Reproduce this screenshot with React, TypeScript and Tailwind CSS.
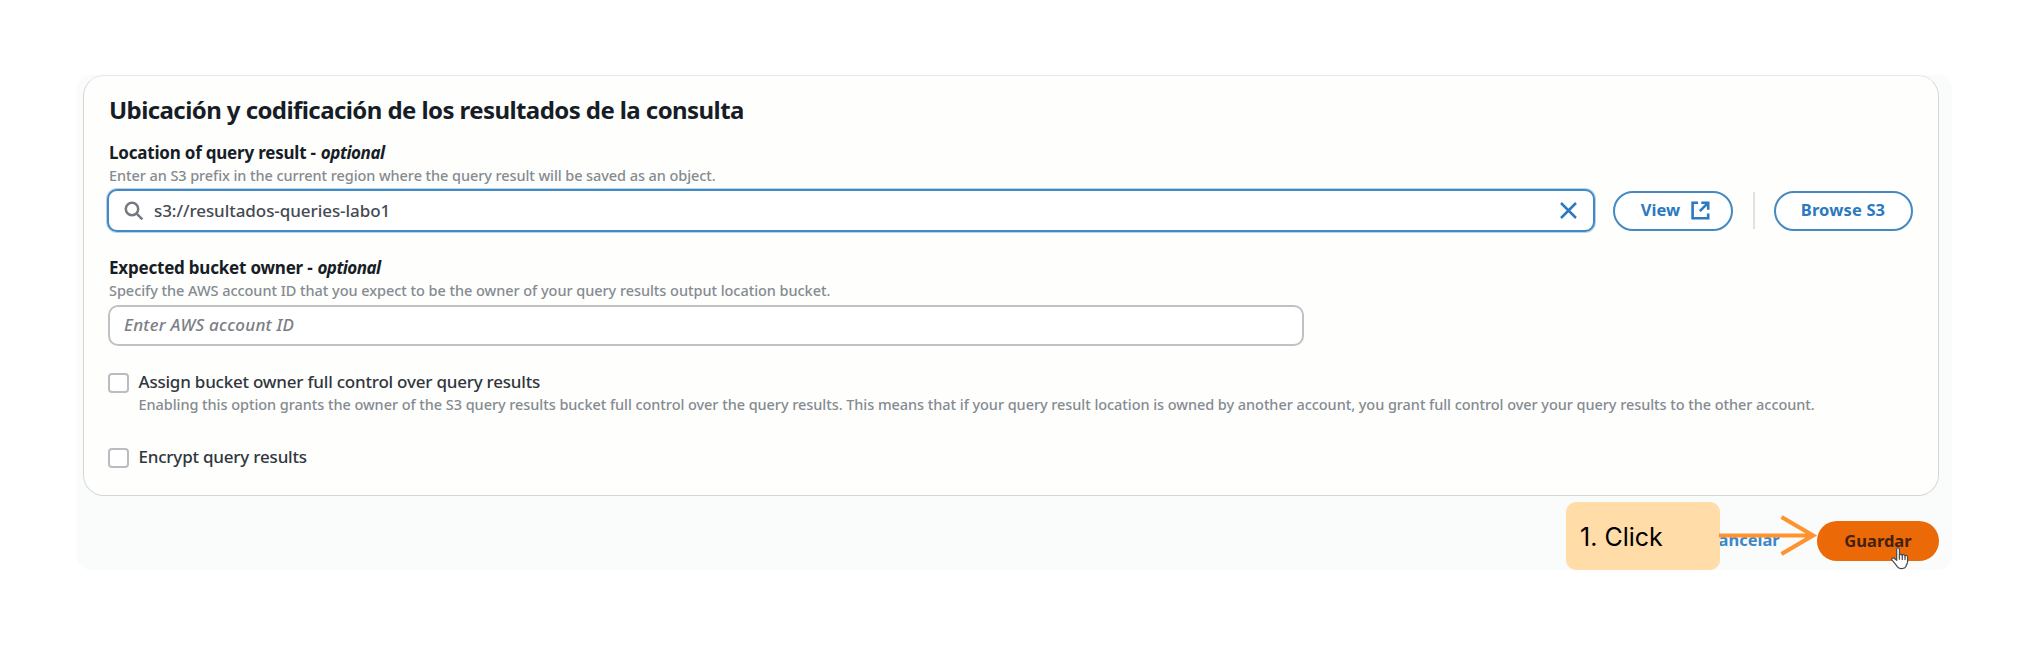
import type { ReactNode } from "react";

function Label({ children, optionalClass }: { children: ReactNode; optionalClass: string }) {
  return (
    <div className="flex h-[22px] items-center gap-[5px] whitespace-nowrap text-[17px] leading-[22px] font-bold text-[#171d26]">
      <span className="tracking-[-0.21px]">{children}</span>
      <em className={optionalClass}>optional</em>
    </div>
  );
}

function Hint({ children, className }: { children: ReactNode; className: string }) {
  return <p className={`h-5 whitespace-nowrap text-[14.5px] leading-5 font-medium text-[#858b91] ${className}`}>{children}</p>;
}

function Checkbox() {
  return <span className="mt-[2px] h-[20.5px] w-[20.5px] shrink-0 rounded-[4px] border-2 border-[#b9bdc1] bg-white" />;
}

function SearchIcon() {
  return (
    <svg className="h-5 w-5 shrink-0" viewBox="0 0 20 20" fill="none" stroke="#737980" strokeWidth="2.5">
      <circle cx="8" cy="8" r="6.2" />
      <path d="M12.4 12.4 18.4 18.4" />
    </svg>
  );
}

function ExternalIcon() {
  return (
    <svg className="h-[19px] w-[19px] shrink-0" viewBox="0 0 19 19" fill="none" stroke="#2b79c0" strokeWidth="2.6">
      <path d="M7 1.8H1.6v15.4h15.6V12.5" />
      <path d="M10.3 1.8h6.900v7M16.8 2.2 8.800 10.2" />
    </svg>
  );
}

function HandCursor() {
  return (
    <svg className="absolute top-[26px] left-[74px] h-[23px] w-[18px]" viewBox="0 0 19 24" fill="#fff" stroke="#4a4a4a" strokeWidth="1.3" strokeLinejoin="round" strokeLinecap="round">
      <path d="M6 2.2c0-2 2.900-2 2.900 0v6.300c.3-1.300 2.700-1.300 3 .3.4-1.200 2.600-1 2.900.5.7-1 2.700-.7 2.700 1.200v5.300c0 1.800-1.700 3-1.700 4.700-1.500 3-7 3-9 .3C5.500 18.700 3.500 16.500 1.100 13.700c-1.200-1.600.9-3.100 2.300-1.900L6 14z" />
      <path d="M8.900 8.500v4.300M11.900 9v4M14.800 9.700v3.400" fill="none" />
    </svg>
  );
}

export default function App() {
  return (
    <main className="h-[645px] w-[2025px] overflow-hidden bg-white pt-[75px] pl-[77px] font-['Noto_Sans',sans-serif]">
      <div className="h-[495px] w-[1875px] rounded-[14px] bg-[#fafbfb] pl-[6px]">
        <section className="h-[421px] w-[1856px] rounded-[21px] border border-[#d3d6d9] border-t-[#e6e8e8] bg-[#fefefd] pt-[19px] pr-[24px] pl-[25px]">
          <h1 className="h-[30px] text-[24px] leading-[30px] font-bold tracking-[-0.58px] whitespace-nowrap text-[#171d26]">
            Ubicación y codificación de los resultados de la consulta
          </h1>

          <div className="mt-[17px]">
            <Label optionalClass="tracking-[-0.45px]">Location of query result -</Label>
            <Hint className="mt-[1px] tracking-[-0.08px]">
              Enter an S3 prefix in the current region where the query result will be saved as an object.
            </Hint>
            <div className="-ml-[2px] mt-[4px] flex items-center">
              <div className="flex h-[43px] w-[1488px] items-center rounded-[10px] border-2 border-[#4489c2] bg-white pr-[16px] pl-[15px] ring-1 ring-[#b5d5ec]">
                <SearchIcon />
                <span className="ml-[10px] flex-1 text-[17px] leading-[22px] font-medium tracking-[-0.06px] text-[#444a51]">
                  s3://resultados-queries-labo1
                </span>
                <svg className="h-[17px] w-[17px]" viewBox="0 0 17 17" fill="none" stroke="#2b79c0" strokeWidth="2.5">
                  <path d="M1 1 16 16M16 1 1 16" />
                </svg>
              </div>
              <button className="ml-[18px] flex h-[40px] w-[120px] items-center justify-center gap-[11px] rounded-full border-2 border-[#4489c2] bg-white pl-[5px] text-[16.5px] font-bold text-[#2b79c0]">
                <span>View</span>
                <ExternalIcon />
              </button>
              <span className="ml-[19.5px] h-[37px] w-[2px] bg-[#e0e2e4]" />
              <button className="ml-[19px] h-[40px] w-[139px] rounded-full border-2 border-[#4489c2] bg-white text-[16.5px] font-bold tracking-[0.15px] whitespace-nowrap text-[#2b79c0]">
                Browse S3
              </button>
            </div>
          </div>

          <div className="mt-[25px]">
            <Label optionalClass="tracking-[-0.55px]">Expected bucket owner -</Label>
            <Hint className="mt-[1px] tracking-[-0.05px]">
              Specify the AWS account ID that you expect to be the owner of your query results output location bucket.
            </Hint>
            <div className="-ml-px mt-[4.5px] flex h-[41px] w-[1196px] items-center rounded-[10px] border-2 border-[#bfc2c5] bg-white pl-[14px] text-[17px] font-medium text-[#7a8086] italic">
              <span className="tracking-[0.25px]">Enter AWS account ID</span>
            </div>
          </div>

          <div className="-ml-px mt-[25px] flex gap-[10px]">
            <Checkbox />
            <div>
              <p className="h-[22px] text-[17px] leading-[22px] font-medium tracking-[-0.22px] text-[#30363d]">
                Assign bucket owner full control over query results
              </p>
              <Hint className="mt-[1.5px] tracking-[-0.06px]">
                Enabling this option grants the owner of the S3 query results bucket full control over the query results. This means that if your
                query result location is owned by another account, you grant full control over your query results to the other account.
              </Hint>
            </div>
          </div>

          <div className="-ml-px mt-[31.5px] flex gap-[10px]">
            <Checkbox />
            <p className="text-[17px] leading-[22px] font-medium tracking-[-0.2px] text-[#30363d]">Encrypt query results</p>
          </div>
        </section>

        <footer className="flex">
          <div className="relative z-10 mt-[6px] ml-[1483px] flex h-[68px] w-[154px] items-center rounded-[10px] bg-[#ffdca8] pl-[14px] font-['Inter',sans-serif] text-[25px] text-black">
            <span className="pt-[4px]">1. Click</span>
            <svg className="absolute top-[11.5px] left-[153px] h-[42px] w-[100px]" viewBox="0 0 100 42" fill="none" stroke="#ff9330" strokeWidth="4.2">
              <path d="M0 21.5H93M62.5 3 94 21.5 62.5 40" />
            </svg>
          </div>
          <a className="mt-[32.5px] -ml-[12px] text-[16.5px] leading-[22px] font-bold text-[#3d87c8]">Cancelar</a>
          <div className="grow" />
          <button className="relative mt-[25px] mr-[13px] h-[40px] w-[122px] rounded-full bg-[#eb6907] text-[16.5px] font-bold text-[#45200e]">
            Guardar
            <HandCursor />
          </button>
        </footer>
      </div>
    </main>
  );
}
